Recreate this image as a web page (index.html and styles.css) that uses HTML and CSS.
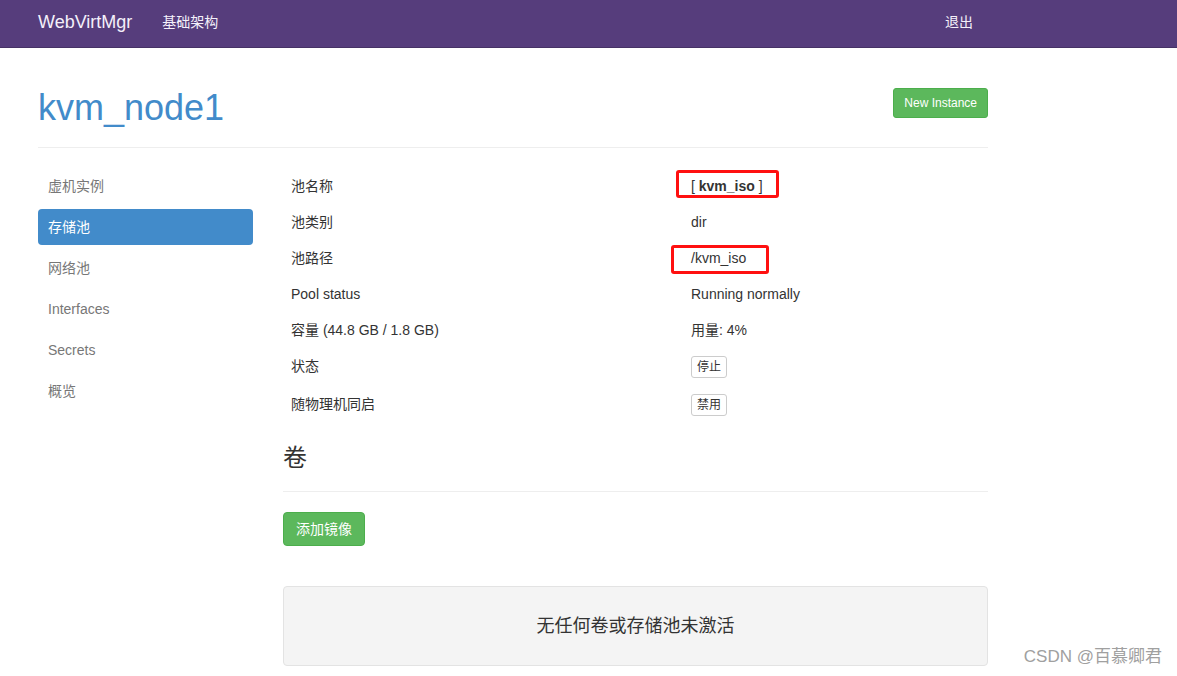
FILE: index.html
```html
<!DOCTYPE html>
<html lang="zh">
<head>
<meta charset="utf-8">
<title>WebVirtMgr</title>
<link rel="stylesheet" href="styles.css">
</head>
<body>
<header class="navbar">
  <div class="navbar-inner">
    <a class="brand">WebVirtMgr</a>
    <a class="nav-link">基础架构</a>
    <span class="spacer"></span>
    <a class="nav-link logout">退出</a>
  </div>
</header>
<div class="container">
  <div class="page-header">
    <h1 class="title">kvm_node1</h1>
    <button class="btn btn-success btn-sm">New Instance</button>
  </div>
  <div class="layout">
    <nav class="sidebar">
      <a class="pill">虚机实例</a>
      <a class="pill active">存储池</a>
      <a class="pill">网络池</a>
      <a class="pill">Interfaces</a>
      <a class="pill">Secrets</a>
      <a class="pill">概览</a>
    </nav>
    <main class="main">
      <div class="info-table">
        <div class="cell">池名称</div>
        <div class="cell value"><span>[ <strong>kvm_iso</strong> ]</span><span class="mark mark-name"></span></div>
        <div class="cell">池类别</div>
        <div class="cell value">dir</div>
        <div class="cell">池路径</div>
        <div class="cell value">/kvm_iso<span class="mark mark-path"></span></div>
        <div class="cell">Pool status</div>
        <div class="cell value">Running normally</div>
        <div class="cell">容量 (44.8 GB / 1.8 GB)</div>
        <div class="cell value">用量: 4%</div>
        <div class="cell">状态</div>
        <div class="cell value"><button class="btn btn-default btn-xs">停止</button></div>
        <div class="cell">随物理机同启</div>
        <div class="cell value"><button class="btn btn-default btn-xs">禁用</button></div>
      </div>
      <div class="section-header">
        <h3 class="section-title">卷</h3>
      </div>
      <button class="btn btn-success btn-md">添加镜像</button>
      <div class="well">无任何卷或存储池未激活</div>
    </main>
  </div>
</div>
<div class="watermark">CSDN @百慕卿君</div>
</body>
</html>
```
FILE: styles.css
```css
* { box-sizing: border-box; }
html, body { margin: 0; padding: 0; }
body {
  font-family: "Liberation Sans", Arial, "Noto Sans CJK SC", sans-serif;
  font-size: 14px;
  line-height: 20px;
  color: #333;
  background: #fff;
  width: 1177px;
  min-height: 676px;
  position: relative;
  overflow: hidden;
}
.navbar {
  background: #563d7c;
  border-bottom: 1px solid #463265;
  height: 48px;
}
.navbar-inner {
  display: flex;
  align-items: center;
  height: 47px;
  padding: 0 38px 3px;
}
.brand {
  font-size: 18px;
  color: #f4f0fa;
  margin-right: 30px;
  line-height: 20px;
}
.nav-link {
  color: #f4f0fa;
  font-size: 14px;
}
.spacer { flex: 1; }
.logout { margin-right: 166px; }

.container {
  width: 1026px;
  padding: 0 38px;
}
.page-header {
  display: flex;
  justify-content: space-between;
  align-items: flex-start;
  padding-top: 40px;
  padding-bottom: 19px;
  border-bottom: 1px solid #eee;
}
.title {
  margin: 0;
  font-size: 36px;
  font-weight: normal;
  line-height: 40px;
  color: #428bca;
}
.btn {
  font-family: "Liberation Sans", Arial, "Noto Sans CJK SC", sans-serif;
  border: 1px solid transparent;
  border-radius: 3px;
  cursor: pointer;
  display: inline-block;
}
.btn-success {
  background: #5cb85c;
  border-color: #4cae4c;
  color: #fff;
}
.btn-sm {
  font-size: 12px;
  line-height: 18px;
  padding: 5px 10px;
  margin-top: 0;
}
.btn-md {
  font-size: 14px;
  line-height: 20px;
  padding: 6px 12px;
  border-radius: 4px;
}
.btn-default {
  background: #fff;
  border-color: #ccc;
  color: #333;
}
.btn-xs {
  font-size: 12px;
  line-height: 18px;
  padding: 1px 5px;
}

.layout {
  display: flex;
  gap: 30px;
  padding-top: 20px;
}
.sidebar {
  width: 215px;
  display: flex;
  flex-direction: column;
  gap: 5px;
}
.pill {
  display: block;
  height: 36px;
  line-height: 36px;
  padding: 0 10px;
  color: #777;
  border-radius: 4px;
}
.pill.active {
  background: #428bca;
  color: #fff;
}
.main {
  flex: 1;
}
.info-table {
  display: grid;
  grid-template-columns: 400px 1fr;
}
.cell {
  padding: 8px;
  line-height: 20px;
}
.value { position: relative; }
.mark {
  position: absolute;
  border: 3px solid #ff1010;
  border-radius: 3px;
}
.mark-name { left: -7px; top: 2px; width: 103px; height: 28px; }
.mark-path { left: -12px; top: 5px; width: 98px; height: 29px; }

.section-header {
  margin-top: 20px;
  padding-bottom: 10px;
  border-bottom: 1px solid #eee;
  margin-bottom: 20px;
}
.section-title {
  margin: 0 0 10px;
  font-size: 24px;
  font-weight: normal;
  line-height: 27px;
}
.well {
  margin-top: 40px;
  height: 80px;
  background: #f4f4f4;
  border: 1px solid #e3e3e3;
  border-radius: 4px;
  display: flex;
  align-items: center;
  justify-content: center;
  font-size: 18px;
  color: #333;
}
.watermark {
  position: absolute;
  right: 15px;
  top: 647px;
  font-size: 17px;
  line-height: 20px;
  color: #a0a0a0;
}
```
